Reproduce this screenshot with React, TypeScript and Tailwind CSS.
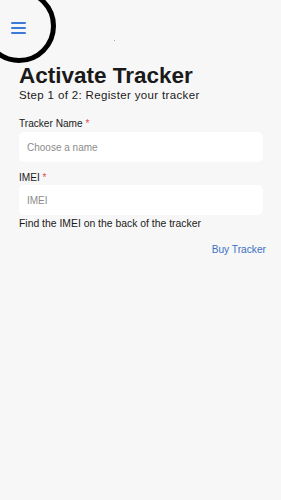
import React from "react";

export default function App() {
  return (
    <div
      className="relative w-[281px] h-[500px] overflow-hidden bg-[#f7f7f7] text-[#1a1a1a]"
      style={{ fontFamily: "'Liberation Sans', Arial, sans-serif" }}
    >
      <div className="absolute left-[-18px] top-[-11px] w-[74px] h-[74px] rounded-full border-[5px] border-black pointer-events-none" />
      <div className="absolute left-[114px] top-[40px] w-[1px] h-[1px] bg-[#b99]" />
      <div className="pl-[19px] pr-[18px] pt-[22px]">
        <button className="flex flex-col gap-[3px] w-[15px] ml-[-8px]">
          <span className="block h-[2px] w-[15px] bg-[#3b7ad6] rounded" />
          <span className="block h-[2px] w-[15px] bg-[#3b7ad6] rounded" />
          <span className="block h-[2px] w-[15px] bg-[#3b7ad6] rounded" />
        </button>
        <h1 className="mt-[30px] text-[22.5px] leading-[24px] font-bold">Activate Tracker</h1>
        <p className="mt-[1px] text-[11.5px] leading-[12px] tracking-[0.35px]">Step 1 of 2: Register your tracker</p>

        <label className="block mt-[16.5px] text-[10.1px] leading-[12px]">
          Tracker Name <span className="text-[#e0554f]">*</span>
        </label>
        <div className="mt-[2.5px] h-[30px] rounded-[5px] bg-white flex items-center px-[8px] text-[10px] text-[#8c8c8c]">
          Choose a name
        </div>

        <label className="block mt-[9.5px] text-[10.1px] leading-[12px]">
          IMEI <span className="text-[#e0554f]">*</span>
        </label>
        <div className="mt-[1.5px] h-[30px] rounded-[5px] bg-white flex items-center px-[8px] text-[10px] text-[#8c8c8c]">
          IMEI
        </div>
        <p className="mt-[3.4px] text-[10.4px] leading-[12px]">Find the IMEI on the back of the tracker</p>
        <div className="flex justify-end mt-[14px] mr-[-3px]">
          <span className="text-[10.2px] leading-[12px] text-[#3a6fc6]">Buy Tracker</span>
        </div>
      </div>
    </div>
  );
}
